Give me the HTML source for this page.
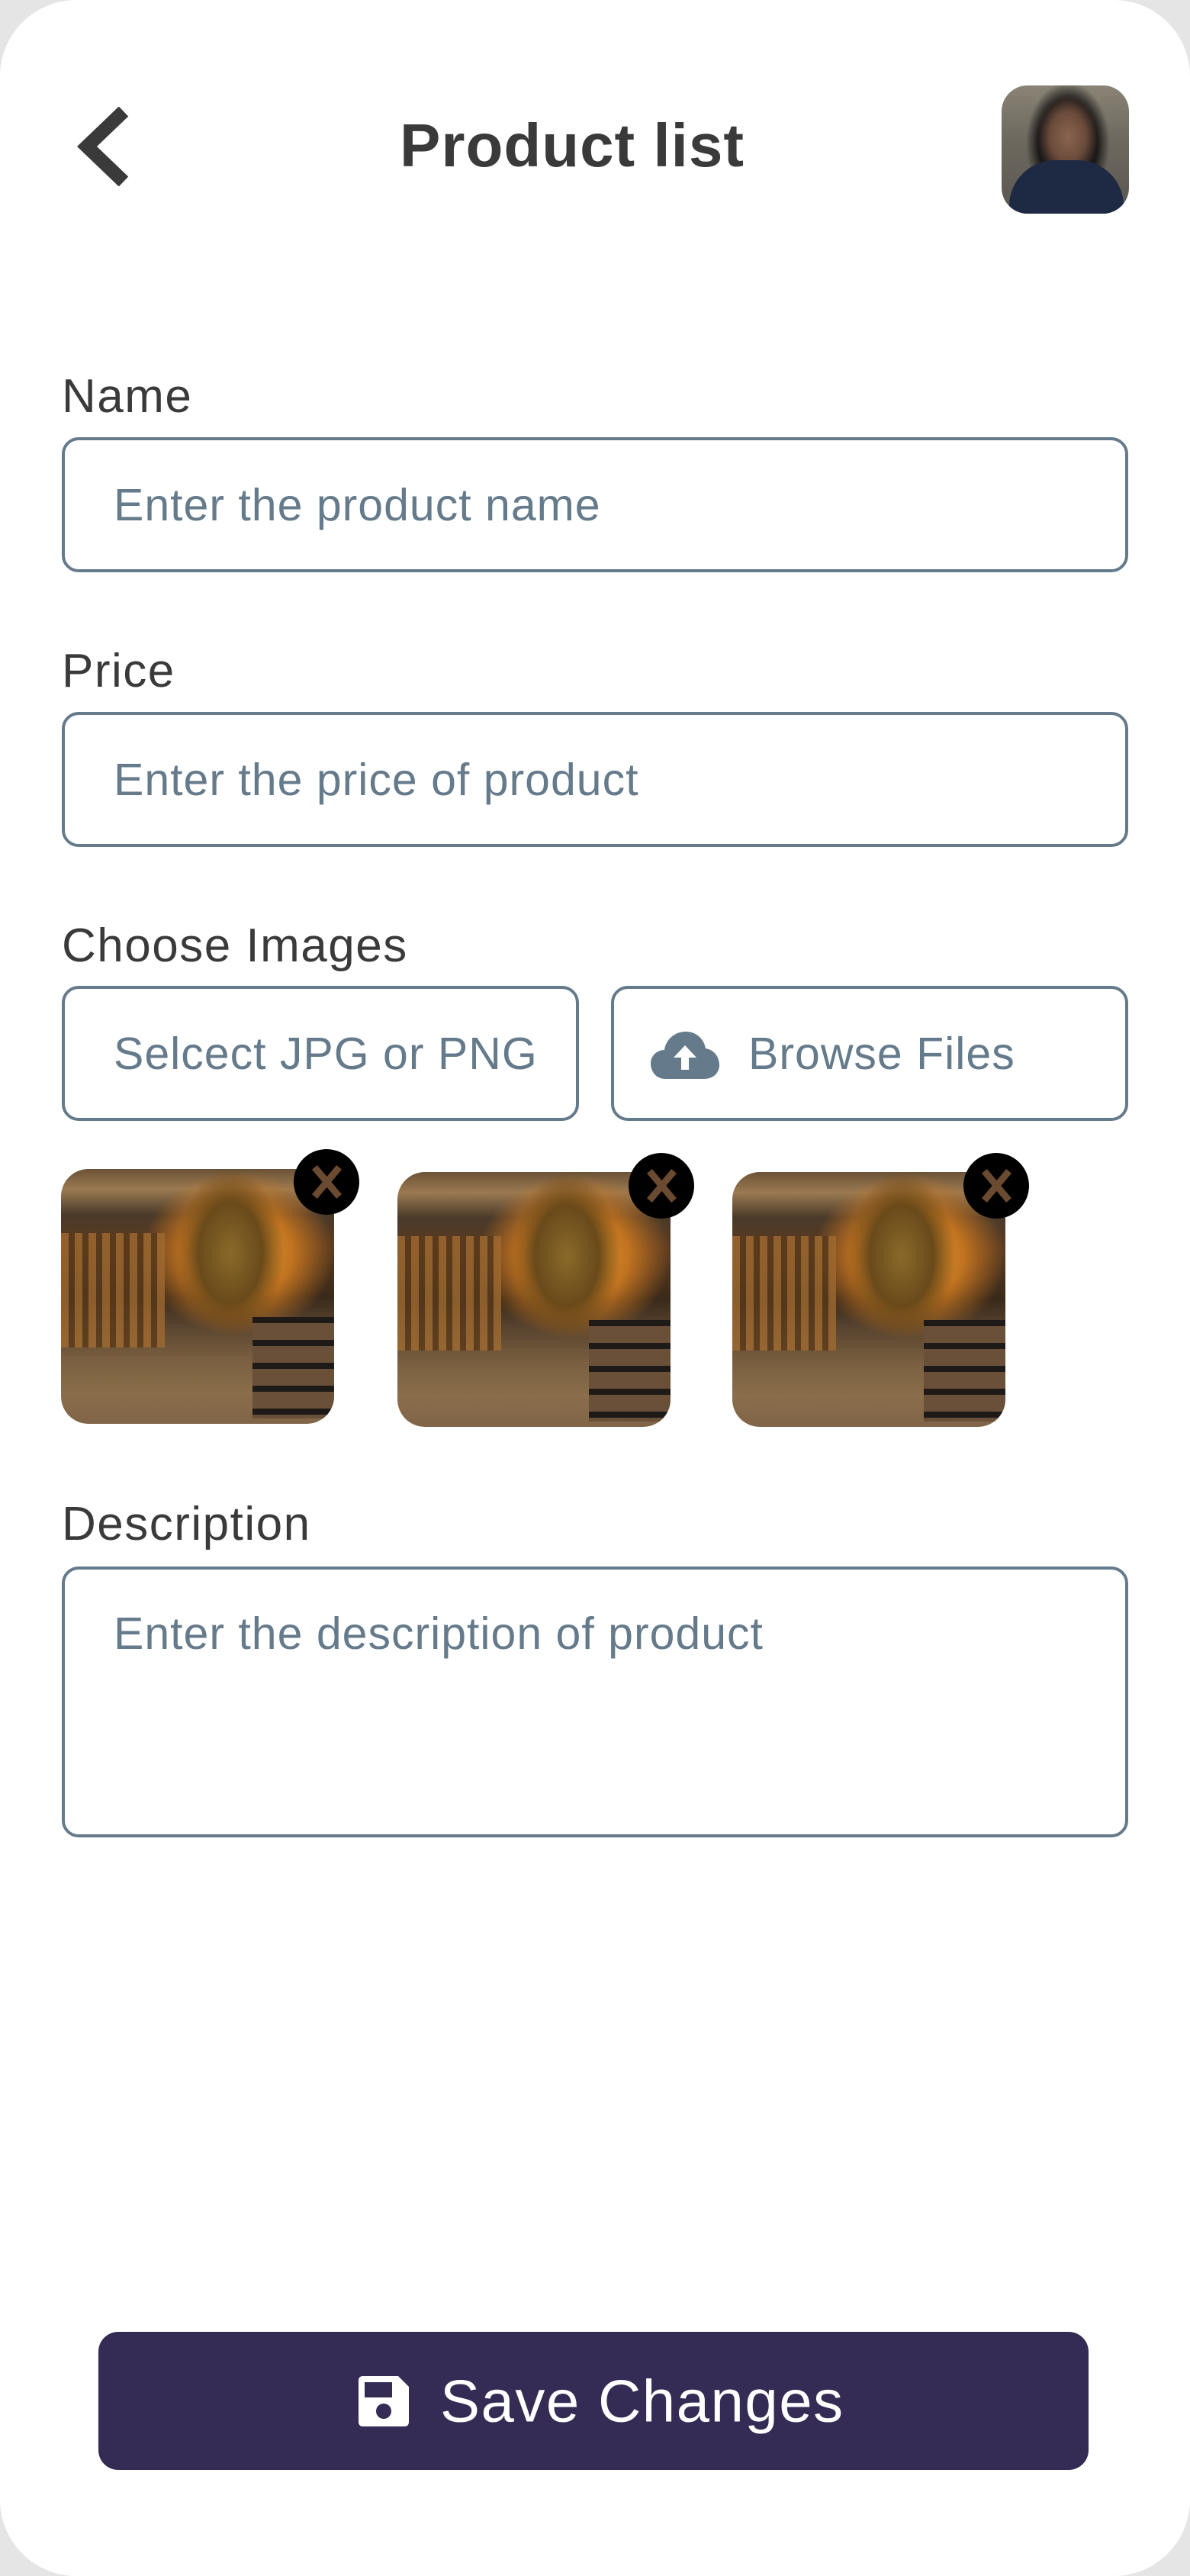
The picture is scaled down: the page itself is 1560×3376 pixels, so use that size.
<!DOCTYPE html>
<html><head><meta charset="utf-8"><style>
*{margin:0;padding:0;box-sizing:border-box}
html,body{width:1560px;height:3376px;background:#e5e5e5;overflow:hidden;font-family:"Liberation Sans",sans-serif}
.page{position:absolute;left:0;top:0;width:1560px;height:3376px;background:#fff;border-radius:100px}
.title{position:absolute;left:0;width:1500px;top:145px;text-align:center;font-size:80px;font-weight:bold;color:#3a3a3a;letter-spacing:1px}
.label{position:absolute;left:81px;font-size:62px;color:#3a3a3a;letter-spacing:1.5px}
.inp{position:absolute;border:4px solid #657a8a;border-radius:22px;color:#657a8a;font-size:59px;letter-spacing:1px}
.inp span{position:absolute;left:64px;top:50%;transform:translateY(-50%);white-space:nowrap}
.img{position:absolute;width:358px;height:334px;border-radius:36px;overflow:hidden;
background:
radial-gradient(ellipse 70px 110px at 62% 33%,#8a6a2a 0%,#6a4a1a 60%,transparent 100%),
radial-gradient(ellipse 140px 120px at 65% 33%,#e0a030 0%,#c27320 50%,transparent 90%),
linear-gradient(180deg,#6b5236 0%,#9b7a52 8%,#4a3a2a 18%,#5a3a20 30%,#3a2a1a 50%,#5a4530 62%,#7a6040 75%,#8a6e4a 88%,#806448 100%)}
.img .stairs{position:absolute;left:0;top:25%;width:38%;height:45%;background:repeating-linear-gradient(90deg,#a06a30 0 10px,#5a3a1a 10px 18px);opacity:.8}
.img .tbl{position:absolute;right:0;top:58%;width:30%;height:40%;background:repeating-linear-gradient(180deg,#1e1a18 0 8px,#6a5038 8px 30px)}
.x{position:absolute;width:86px;height:86px;border-radius:50%;background:#000}
.x:before,.x:after{content:"";position:absolute;left:39px;top:18px;width:9px;height:50px;background:#6a4a30;transform:rotate(40deg)}
.x:after{transform:rotate(-40deg)}
</style></head><body>
<div class="page">
<svg style="position:absolute;left:100px;top:140px" width="72" height="104" viewBox="0 0 72 104"><path d="M62 6 L14 52 L62 98" fill="none" stroke="#3a3a3a" stroke-width="18"/></svg>
<div class="title">Product list</div>
<div style="position:absolute;left:1313px;top:112px;width:167px;height:168px;border-radius:34px;overflow:hidden;background:
radial-gradient(ellipse 40px 55px at 52% 40%,#8a6550 0%,#6a4a3a 60%,transparent 100%),
radial-gradient(ellipse 55px 80px at 52% 45%,#1a1818 0%,#1a1818 70%,transparent 100%),
linear-gradient(180deg,#8a8476 0%,#6f6a60 40%,#5a5650 100%)">
<div style="position:absolute;left:10px;bottom:-20px;width:150px;height:90px;border-radius:60px 60px 0 0;background:#1e2a44"></div>
</div>

<div class="label" style="top:484px">Name</div>
<div class="inp" style="left:81px;top:573px;width:1398px;height:177px"><span>Enter the product name</span></div>

<div class="label" style="top:844px">Price</div>
<div class="inp" style="left:81px;top:933px;width:1398px;height:177px"><span>Enter the price of product</span></div>

<div class="label" style="top:1204px">Choose Images</div>
<div class="inp" style="left:81px;top:1292px;width:678px;height:177px"><span>Selcect JPG or PNG</span></div>
<div class="inp" style="left:801px;top:1292px;width:678px;height:177px">
<svg style="position:absolute;left:48px;top:56px" width="90" height="62" viewBox="0 0 90 62"><path d="M20 62 C5 62 0 50 0 42 C0 30 10 24 18 24 C20 10 32 0 46 0 C60 0 70 10 72 22 C84 24 90 34 90 44 C90 54 82 62 70 62 Z" fill="#657a8a"/><path d="M45 18 L30 34 H40 V50 H50 V34 H60 Z" fill="#fff"/></svg>
<span style="left:176px">Browse Files</span></div>

<div class="img" style="left:80px;top:1532px"><div class="stairs"></div><div class="tbl"></div></div>
<div class="x" style="left:385px;top:1506px"></div>
<div class="img" style="left:521px;top:1536px"><div class="stairs"></div><div class="tbl"></div></div>
<div class="x" style="left:824px;top:1511px"></div>
<div class="img" style="left:960px;top:1536px"><div class="stairs"></div><div class="tbl"></div></div>
<div class="x" style="left:1263px;top:1511px"></div>

<div class="label" style="top:1962px">Description</div>
<div class="inp" style="left:81px;top:2053px;width:1398px;height:355px"><span style="top:84px">Enter the description of product</span></div>

<div style="position:absolute;left:129px;top:3056px;width:1298px;height:181px;border-radius:26px;background:#342c55;color:#fff;font-size:78px;letter-spacing:1.5px">
<svg style="position:absolute;left:341px;top:58px" width="66" height="66" viewBox="0 0 66 66"><path d="M6 0 H52 L66 14 V60 Q66 66 60 66 H6 Q0 66 0 60 V6 Q0 0 6 0 Z" fill="#fff"/><rect x="8" y="8" width="36" height="20" fill="#342c55"/><circle cx="33" cy="46" r="10" fill="#342c55"/></svg>
<span style="position:absolute;left:448px;top:50%;transform:translateY(-50%)">Save Changes</span></div>
</div>
</body></html>
